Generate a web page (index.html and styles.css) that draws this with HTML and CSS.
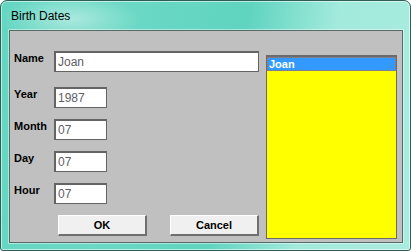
FILE: index.html
```html
<!DOCTYPE html>
<html>
<head>
  <title>Birth Dates</title>
  <link rel="stylesheet" href="styles.css">
</head>
<body>
  <div class="window">
    <div class="titlebar">Birth Dates</div>
    <div class="client">
      <div class="form">
        <div class="row name-row">
          <label class="label">Name</label>
          <input class="field wide" type="text" value="Joan" readonly>
        </div>
        <div class="row">
          <label class="label">Year</label>
          <input class="field" type="text" value="1987" readonly>
        </div>
        <div class="row">
          <label class="label">Month</label>
          <input class="field" type="text" value="07" readonly>
        </div>
        <div class="row">
          <label class="label">Day</label>
          <input class="field" type="text" value="07" readonly>
        </div>
        <div class="row">
          <label class="label">Hour</label>
          <input class="field" type="text" value="07" readonly>
        </div>
        <div class="buttons">
          <button class="butt">OK</button>
          <button class="butt">Cancel</button>
        </div>
      </div>
      <div class="listbox">
        <div class="item selected">Joan</div>
      </div>
    </div>
  </div>
</body>
</html>
```

FILE: styles.css
```css
html,
body {
  margin: 0;
  padding: 0;
  background: #ffffff;
}

.window {
  box-sizing: border-box;
  width: 411px;
  height: 251px;
  border: 1px solid #2f5e56;
  border-radius: 7px 7px 3px 3px;
  box-shadow: inset 0 0 0 1px rgba(255, 255, 255, 0.55);
  background:
    radial-gradient(ellipse 70px 26px at 70px 18px, rgba(255, 255, 255, 0.45), rgba(255, 255, 255, 0) 100%),
    linear-gradient(100deg, #63d6c2 0%, #6ad8c4 30%, #5fd4bf 55%, #a2eadc 75%, #a9ecdf 100%);
  display: flex;
  flex-direction: column;
  font-family: "Liberation Sans", Arial, sans-serif;
}

.titlebar {
  height: 29px;
  box-sizing: border-box;
  padding: 8px 0 0 10px;
  font-size: 12px;
  color: #000000;
}

.client {
  box-sizing: border-box;
  height: 213px;
  margin: 0 7px 0 8px;
  background-color: #c0c0c0;
  border: 1px solid #566a66;
  box-shadow: 0 0 0 1px rgba(255, 255, 255, 0.45);
  display: flex;
  padding: 20px 4px 3px 4px;
  gap: 7px;
}

.form {
  display: flex;
  flex-direction: column;
  gap: 11px;
}

.name-row {
  margin-bottom: 4px;
}

.row {
  display: flex;
  align-items: flex-start;
}

.label {
  width: 40px;
  font-size: 11px;
  font-weight: bold;
  line-height: 14px;
  color: #000000;
}

.field {
  box-sizing: border-box;
  width: 53px;
  height: 21px;
  margin: 0;
  padding: 0 2px;
  border: 1px solid #646464;
  border-width: 2px 1px 1px 2px;
  background: #ffffff;
  font-family: "Liberation Sans", Arial, sans-serif;
  font-size: 12px;
  color: #5e5e64;
  outline: none;
}

.field.wide {
  width: 205px;
}

.buttons {
  display: flex;
  gap: 23px;
  padding-left: 44px;
}

.butt {
  box-sizing: border-box;
  width: 89px;
  height: 21px;
  margin: 0;
  padding: 0;
  background: #f0f0f0;
  border: 1px solid #ffffff;
  border-right: 2px solid #6f6f6f;
  border-bottom: 2px solid #6f6f6f;
  font-family: "Liberation Sans", Arial, sans-serif;
  font-size: 11px;
  font-weight: bold;
  color: #000000;
}

.listbox {
  box-sizing: border-box;
  width: 131px;
  margin-top: 4px;
  background: #ffff00;
  border: 1px solid #6b6b6b;
  border-width: 2px 1px 1px 1px;
}

.item {
  height: 14px;
  padding: 0 2px;
  font-size: 11px;
  font-weight: bold;
  line-height: 14px;
  color: #ffffff;
}

.item.selected {
  background: #3399ff;
  outline: 1px dotted #c8641e;
  outline-offset: -1px;
}
```
